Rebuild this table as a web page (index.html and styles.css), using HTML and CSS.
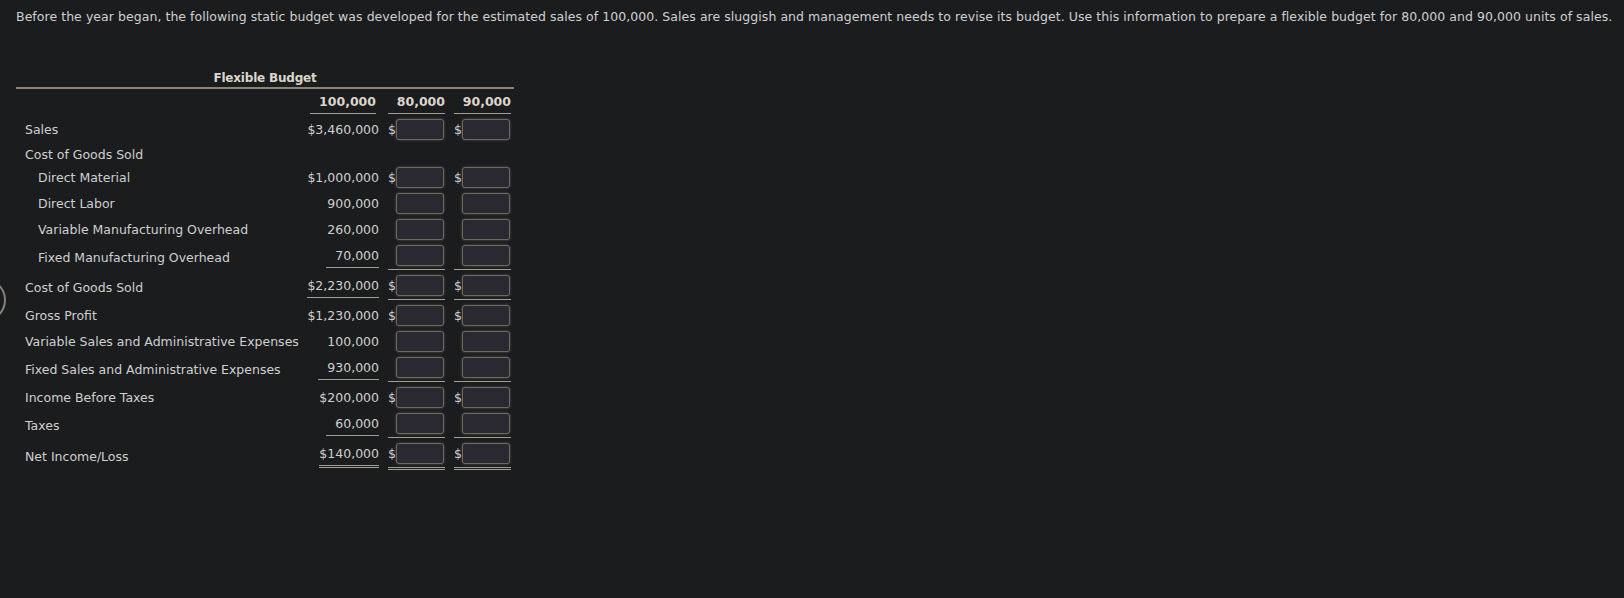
FILE: index.html
```html
<!DOCTYPE html>
<html lang="en">
<head>
  <meta charset="UTF-8">
  <title>Flexible Budget</title>
  <link rel="stylesheet" href="styles.css">
</head>
<body>

  <div class="nav-ring"></div>

  <p class="intro">Before the year began, the following static budget was developed for the estimated sales of 100,000. Sales are sluggish and management needs to revise its budget. Use this information to prepare a flexible budget for 80,000 and 90,000 units of sales.</p>

  <div class="budget">
    <div class="title">Flexible Budget</div>

    <div class="row head">
      <span></span>
      <span class="col-head first">100,000</span>
      <span class="col-head">80,000</span>
      <span class="col-head">90,000</span>
    </div>

    <div class="row">
      <span class="label">Sales</span>
      <span class="val"><span class="num">$3,460,000</span></span>
      <span class="amt"><span class="cur">$</span><input type="text"></span>
      <span class="amt"><span class="cur">$</span><input type="text"></span>
    </div>

    <div class="row section">
      <span class="label">Cost of Goods Sold</span>
    </div>

    <div class="row">
      <span class="label sub">Direct Material</span>
      <span class="val"><span class="num">$1,000,000</span></span>
      <span class="amt"><span class="cur">$</span><input type="text"></span>
      <span class="amt"><span class="cur">$</span><input type="text"></span>
    </div>

    <div class="row">
      <span class="label sub">Direct Labor</span>
      <span class="val"><span class="num">900,000</span></span>
      <span class="amt"><span class="cur"></span><input type="text"></span>
      <span class="amt"><span class="cur"></span><input type="text"></span>
    </div>

    <div class="row">
      <span class="label sub">Variable Manufacturing Overhead</span>
      <span class="val"><span class="num">260,000</span></span>
      <span class="amt"><span class="cur"></span><input type="text"></span>
      <span class="amt"><span class="cur"></span><input type="text"></span>
    </div>

    <div class="row">
      <span class="label sub">Fixed Manufacturing Overhead</span>
      <span class="val"><span class="num line pad">70,000</span></span>
      <span class="amt line"><span class="cur"></span><input type="text"></span>
      <span class="amt line"><span class="cur"></span><input type="text"></span>
    </div>

    <div class="row">
      <span class="label">Cost of Goods Sold</span>
      <span class="val"><span class="num line">$2,230,000</span></span>
      <span class="amt line"><span class="cur">$</span><input type="text"></span>
      <span class="amt line"><span class="cur">$</span><input type="text"></span>
    </div>

    <div class="row">
      <span class="label">Gross Profit</span>
      <span class="val"><span class="num">$1,230,000</span></span>
      <span class="amt"><span class="cur">$</span><input type="text"></span>
      <span class="amt"><span class="cur">$</span><input type="text"></span>
    </div>

    <div class="row">
      <span class="label">Variable Sales and Administrative Expenses</span>
      <span class="val"><span class="num">100,000</span></span>
      <span class="amt"><span class="cur"></span><input type="text"></span>
      <span class="amt"><span class="cur"></span><input type="text"></span>
    </div>

    <div class="row">
      <span class="label">Fixed Sales and Administrative Expenses</span>
      <span class="val"><span class="num line pad">930,000</span></span>
      <span class="amt line"><span class="cur"></span><input type="text"></span>
      <span class="amt line"><span class="cur"></span><input type="text"></span>
    </div>

    <div class="row">
      <span class="label">Income Before Taxes</span>
      <span class="val"><span class="num">$200,000</span></span>
      <span class="amt"><span class="cur">$</span><input type="text"></span>
      <span class="amt"><span class="cur">$</span><input type="text"></span>
    </div>

    <div class="row">
      <span class="label">Taxes</span>
      <span class="val"><span class="num line pad">60,000</span></span>
      <span class="amt line"><span class="cur"></span><input type="text"></span>
      <span class="amt line"><span class="cur"></span><input type="text"></span>
    </div>

    <div class="row">
      <span class="label">Net Income/Loss</span>
      <span class="val"><span class="num total">$140,000</span></span>
      <span class="amt total"><span class="cur">$</span><input type="text"></span>
      <span class="amt total"><span class="cur">$</span><input type="text"></span>
    </div>
  </div>

</body>
</html>
```

FILE: styles.css
```css
body {
  margin: 0;
  padding: 9px 16px 0;
  background: #1b1c1e;
  color: #d0d0d0;
  font-family: 'DejaVu Sans', Verdana, sans-serif;
  font-size: 12.5px;
  line-height: 15px;
  position: relative;
  height: 589px;
  overflow: hidden;
}

.nav-ring {
  position: absolute;
  left: -38px;
  top: 278px;
  width: 44px;
  height: 44px;
  box-sizing: border-box;
  border: 2px solid #86817a;
  border-radius: 50%;
}

.intro {
  margin: 0;
  white-space: nowrap;
  letter-spacing: 0.05px;
}

.budget {
  width: 498px;
  margin-top: 47px;
}

.title {
  text-align: center;
  font-weight: bold;
  font-size: 12px;
  letter-spacing: -0.2px;
  color: #dcd6cb;
  padding-bottom: 1px;
  border-bottom: 2px solid #8d8475;
}

.row {
  display: grid;
  grid-template-columns: 282px 72px 57px 57px;
  column-gap: 9px;
  align-items: center;
  padding: 2px 0 3px;
}

.row.head {
  padding: 5px 0 0;
  margin-bottom: 3px;
  align-items: end;
}

.col-head {
  font-weight: bold;
  color: #dcd6cb;
  text-align: right;
  padding-bottom: 4px;
  border-bottom: 1px solid #a29e96;
}

.col-head.first {
  margin: 0 3px;
}

.row.section {
  padding: 4px 0 3px;
}

.label {
  padding-left: 9px;
  white-space: nowrap;
}

.label.sub {
  padding-left: 22px;
}

.val {
  display: flex;
  justify-content: flex-end;
}

.num {
  white-space: nowrap;
}

.num.line {
  padding-bottom: 4px;
  border-bottom: 1px solid #a29e96;
}

.num.pad {
  padding-left: 9px;
}

.num.total {
  padding-bottom: 4px;
  border-bottom: 3px double #a29e96;
}

.amt {
  display: flex;
  align-items: center;
}

.amt.line {
  padding-bottom: 3px;
  border-bottom: 1px solid #a29e96;
}

.amt.total {
  padding-bottom: 3px;
  border-bottom: 3px double #a29e96;
}

.cur {
  width: 8px;
  flex: none;
}

input {
  width: 48px;
  height: 21px;
  box-sizing: border-box;
  margin: 0;
  padding: 0 4px;
  background: #2a2932;
  border: 1px solid #6e695f;
  border-radius: 3px;
  box-shadow: 0 0 3px rgba(190, 180, 160, 0.35);
  color: #d0d0d0;
  font: inherit;
}
```
